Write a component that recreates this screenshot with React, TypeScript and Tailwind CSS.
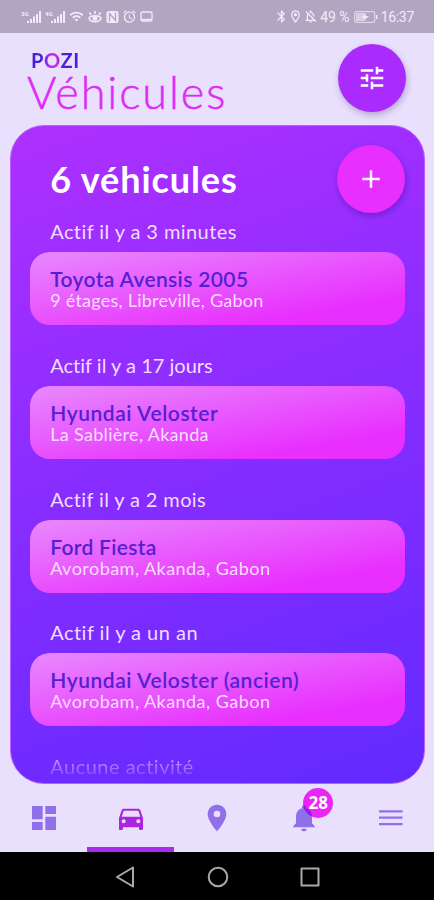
import {
  MdDashboard,
  MdDirectionsCar,
  MdLocationOn,
  MdNotifications,
  MdTune,
  MdAdd,
  MdBluetooth,
  MdOutlineLocationOn,
  MdOutlineNotificationsOff,
  MdWifi,
  MdAlarm,
} from 'react-icons/md';

interface Vehicle {
  name: string;
  place: string;
  activity: string;
  labelClass: string;
  nameClass: string;
  placeClass: string;
}

const VEHICLES: Vehicle[] = [
  {
    name: 'Toyota Avensis 2005',
    place: '9 étages, Libreville, Gabon',
    activity: 'Actif il y a 3 minutes',
    labelClass: 'tracking-[0.42px]',
    nameClass: 'tracking-[0.36px]',
    placeClass: 'tracking-[0.24px]',
  },
  {
    name: 'Hyundai Veloster',
    place: 'La Sablière, Akanda',
    activity: 'Actif il y a 17 jours',
    labelClass: 'tracking-[0.02px]',
    nameClass: 'tracking-[0.56px]',
    placeClass: 'tracking-[0.32px]',
  },
  {
    name: 'Ford Fiesta',
    place: 'Avorobam, Akanda, Gabon',
    activity: 'Actif il y a 2 mois',
    labelClass: 'tracking-[0.38px]',
    nameClass: 'tracking-[0.3px]',
    placeClass: 'tracking-[0.47px]',
  },
  {
    name: 'Hyundai Veloster (ancien)',
    place: 'Avorobam, Akanda, Gabon',
    activity: 'Actif il y a un an',
    labelClass: 'tracking-[0.48px]',
    nameClass: 'tracking-[0.56px]',
    placeClass: 'tracking-[0.47px]',
  },
];

function Signal({ label }: { label: string }) {
  return (
    <svg width="22" height="14" viewBox="0 0 22 14" fill="currentColor">
      <text x="0" y="5.5" fontSize="6" fontWeight="700">{label}</text>
      <rect x="6" y="11" width="2" height="2" />
      <rect x="9" y="9" width="2" height="4" />
      <rect x="12" y="6.5" width="2" height="6.5" />
      <rect x="15" y="4" width="2" height="9" />
      <rect x="18" y="1" width="2" height="12" />
    </svg>
  );
}

function StatusBar() {
  return (
    <div className="flex h-[33px] shrink-0 items-center bg-[#b1a6c1] pl-[21px] font-[Roboto,sans-serif] text-[#f1ebfb]">
      <Signal label="3G" />
      <span className="w-[2px]" />
      <Signal label="4G" />
      <MdWifi className="ml-[2px] size-[15px]" />
      <svg className="ml-[4px]" width="14" height="14" viewBox="0 0 14 14" fill="none" stroke="currentColor" strokeWidth="1.6">
        <path d="M1 8c1.5-3 10.5-3 12 0-1.5 5-10.5 5-12 0zM3 5 1.5 2.5M7 4V1M11 5l1.5-2.5" />
        <circle cx="7" cy="8.3" r="1.7" fill="currentColor" />
      </svg>
      <svg className="ml-[4px]" width="13" height="14" viewBox="0 0 13 14">
        <rect x="0.5" y="1" width="12" height="12" rx="2" fill="currentColor" />
        <path d="M3.5 11.5v-8l6 7v-8" fill="none" stroke="#b1a6c1" strokeWidth="1.3" />
      </svg>
      <MdAlarm className="ml-[3px] size-[15px]" />
      <svg className="ml-[3px]" width="13" height="12" viewBox="0 0 13 12" fill="none" stroke="currentColor" strokeWidth="1.3">
        <rect x="1" y="1" width="11" height="9" rx="1.5" />
        <path d="M1 8.5h11" />
      </svg>
      <div className="ml-auto flex items-center pr-[20px]">
        <MdBluetooth className="size-[15px]" />
        <MdOutlineLocationOn className="-ml-px size-[15px]" />
        <MdOutlineNotificationsOff className="size-[15px]" />
        <span className="ml-[2px] text-[14px] leading-none">49 %</span>
        <svg className="ml-[4px]" width="24" height="12" viewBox="0 0 24 12" fill="none" stroke="currentColor">
          <rect x="0.7" y="0.7" width="20" height="10.6" rx="2" strokeWidth="1.2" opacity="0.7" />
          <rect x="2" y="2" width="9" height="8" fill="currentColor" stroke="none" opacity="0.6" />
          <path d="M12.5 2 7 7h3.5L9.5 10 15 5h-3.5z" fill="currentColor" stroke="none" />
          <path d="M22.8 4v4" strokeWidth="1.4" />
        </svg>
        <span className="ml-[3px] text-[14px] leading-none tracking-[-0.3px]">16:37</span>
      </div>
    </div>
  );
}

function Header() {
  return (
    <header className="flex h-[92px] shrink-0 justify-between pl-[27px] pr-[28px] pt-[11px]">
      <div>
        <div className="ml-[4px] w-fit bg-[linear-gradient(90deg,#4a1fd8_24%,#b42af0_36%,#c82af0_52%,#4a1fd8_66%)] bg-clip-text pt-[6px] text-[20px] font-bold leading-[20px] tracking-[0.6px] text-transparent">
          POZI
        </div>
        <h1 className="text-[45px] font-light leading-[45px] tracking-[1.9px] text-[#de2bf5] [-webkit-text-stroke:0.5px_#de2bf5]">
          Véhicules
        </h1>
      </div>
      <button className="flex size-[68px] items-center justify-center rounded-full bg-[#a92bfd] text-white shadow-[1px_3px_6px_rgba(60,30,110,0.3)]">
        <MdTune className="size-[30px]" />
      </button>
    </header>
  );
}

function VehicleItem({ vehicle }: { vehicle: Vehicle }) {
  return (
    <li className="h-[133.8px]">
      <div className={`pl-[20px] text-[20px] leading-[24px] text-[#f1ddff] ${vehicle.labelClass}`}>
        {vehicle.activity}
      </div>
      <div className="mt-[9px] h-[73px] rounded-[20px] bg-[linear-gradient(170deg,#e884fe_5%,#e82fff_80%)] pl-[20px] pt-[15px]">
        <div className={`text-[21px] font-semibold leading-[23px] text-[#5520d0] ${vehicle.nameClass}`}>
          {vehicle.name}
        </div>
        <div className={`text-[18px] leading-[21px] text-[#fbdcff] ${vehicle.placeClass}`}>
          {vehicle.place}
        </div>
      </div>
    </li>
  );
}

function TabBar() {
  return (
    <nav className="grid h-[68px] shrink-0 grid-cols-5 text-[#4714d8]/55">
      <div className="flex justify-center pl-px pt-[18px]">
        <MdDashboard className="size-8" />
      </div>
      <div className="flex justify-center border-b-[5px] border-[#ab2aef] pl-px pt-[18px] text-[#ab24e0]">
        <MdDirectionsCar className="size-8" />
      </div>
      <div className="flex justify-center pl-px pt-[18px]">
        <MdLocationOn className="size-8" />
      </div>
      <div className="flex justify-center pl-px pt-[18px]">
        <div className="relative size-8">
          <span className="absolute -top-[14px] left-[15px] size-[30px] rounded-full bg-[#ea26f6]" />
          <MdNotifications className="relative size-8" />
          <span className="absolute -top-[14px] left-[15px] flex size-[30px] items-center justify-center font-['Noto_Sans',sans-serif] text-[17px] font-bold text-white">
            28
          </span>
        </div>
      </div>
      <div className="flex justify-center pl-px pt-[18px]">
        <svg className="size-8" viewBox="0 0 32 32" fill="none" stroke="currentColor" strokeWidth="2.3">
          <path d="M4 9.3h23.5M4 15.7h23.5M4 22.1h23.5" />
        </svg>
      </div>
    </nav>
  );
}

function SystemBar() {
  return (
    <div className="flex h-[49px] shrink-0 items-center justify-between bg-black pl-[115px] pr-[113px]">
      <svg width="22" height="22" viewBox="0 0 22 22" fill="none" stroke="#aaa" strokeWidth="2" strokeLinejoin="round">
        <path d="M18 1.5v19L2 11z" />
      </svg>
      <svg width="22" height="22" viewBox="0 0 22 22" fill="none" stroke="#aaa" strokeWidth="2">
        <circle cx="11" cy="11" r="9.3" />
      </svg>
      <svg width="22" height="22" viewBox="0 0 22 22" fill="none" stroke="#aaa" strokeWidth="2" strokeLinejoin="round">
        <rect x="2.5" y="2.5" width="17" height="17" />
      </svg>
    </div>
  );
}

export default function App() {
  return (
    <div className="flex h-[900px] w-[434px] flex-col overflow-hidden bg-[#e8e0fd] font-[Lato,sans-serif] [font-variant-ligatures:none]">
      <StatusBar />
      <Header />
      <main className="ml-[10px] mr-[9px] h-[659px] shrink-0 overflow-hidden rounded-[34px] border border-[#bd5cff] bg-[linear-gradient(160deg,#ae30ff_0%,#8a2dff_45%,#622aff_100%)] pl-[19.2px] pr-[19px]">
        <div className="flex items-center justify-between pl-[20px] pt-[19px]">
          <h2 className="text-[36px] font-bold leading-[67px] tracking-[0.9px] text-white">6 véhicules</h2>
          <button className="flex size-[68px] items-center justify-center rounded-full bg-[#e82fff] text-white shadow-[1px_3px_6px_rgba(60,10,140,0.4)]">
            <MdAdd className="size-[30px]" />
          </button>
        </div>
        <ul className="mt-[6px]">
          {VEHICLES.map((vehicle) => (
            <VehicleItem key={vehicle.name} vehicle={vehicle} />
          ))}
        </ul>
        <div className="bg-[linear-gradient(180deg,#c9a0ff_10%,#8a50ff_90%)] bg-clip-text pl-[20px] text-[20px] leading-[24px] tracking-[0.5px] text-transparent">
          Aucune activité
        </div>
      </main>
      <TabBar />
      <SystemBar />
    </div>
  );
}
